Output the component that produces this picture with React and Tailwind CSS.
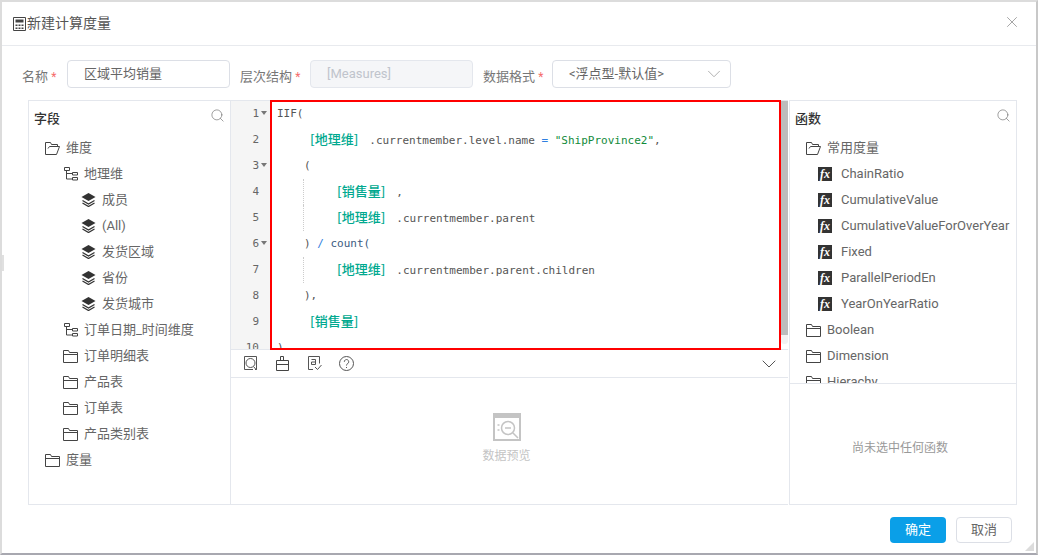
import React from 'react';
import { Search, X, ChevronDown } from 'lucide-react';

const FONT = { fontFamily: 'Roboto, "Noto Sans CJK SC", sans-serif' };

const FolderIcon = () => (
  <svg width="15" height="13" viewBox="0 0 15 13" fill="none" stroke="#444" strokeWidth="1" className="shrink-0">
    <path d="M.5 12.5V.5h5l1 2h8v10z M.5 4.5h14" />
  </svg>
);

const FolderOpenIcon = () => (
  <svg width="15" height="13" viewBox="0 0 15 13" fill="none" stroke="#444" strokeWidth="1" className="shrink-0">
    <path d="M.5 12.5V.5h5l1 2h6v2 M.5 12.5h11l3-8h-10l-1.500 2" />
  </svg>
);

const TreeIcon = () => (
  <svg width="15" height="14" viewBox="0 0 15 14" fill="none" stroke="#444" strokeWidth="1" className="shrink-0">
    <path d="M1.500 .5h5v3h-5z M9.500 5.500h5v2.500h-5z M9.500 10.500h5v2.500h-5z M3.500 3.500v8.500h6 M3.500 6.500h6" />
  </svg>
);

const LayerIcon = () => (
  <svg width="15" height="14" viewBox="0 0 15 14" className="shrink-0">
    <path d="M7.500 0 14.500 4 7.500 8 .5 4z" fill="#333" />
    <path d="M1.500 7.500 7.500 11 13.500 7.500M1.500 10 7.500 13.500 13.500 10" fill="none" stroke="#333" strokeWidth="1.300" />
  </svg>
);

const FxIcon = () => (
  <span className="w-[14px] h-[14px] shrink-0 bg-[#333] text-white flex items-center justify-center font-['Liberation_Serif'] italic font-bold text-[12px] leading-none">
    fx
  </span>
);

const CalcIcon = () => (
  <svg width="13" height="14" viewBox="0 0 13 14" fill="none" className="shrink-0">
    <path d="M.5.5h12v13H.5z" stroke="#444" />
    <path d="M2.500 2.500h8v3h-8z" fill="#444" />
    <path d="M2.500 7.500h2v1.500h-2zM5.500 7.500h2v1.500h-2zM8.500 7.500h2v1.500h-2zM2.500 10.500h2v1.500h-2zM5.500 10.500h2v1.500h-2zM8.500 10.500h2v1.500h-2z" fill="#444" />
  </svg>
);

function Row({ indent, icon, children }) {
  return (
    <div className={`h-[26px] flex items-center gap-[6px] whitespace-nowrap ${indent}`}>
      {icon}
      <span>{children}</span>
    </div>
  );
}

function Label({ children, className }) {
  return (
    <span className={`text-[13px] text-[#777] whitespace-nowrap mt-[5px] ${className}`}>
      {children} <span className="text-[12px] text-[#f56c6c]">*</span>
    </span>
  );
}

const Member = ({ children }) => (
  <span className="text-[#00a98f] font-['Noto_Sans_CJK_SC'] font-medium text-[13px] mr-[11px] leading-none">[{children}]</span>
);

const codeLines = [
  { n: 1, fold: true, body: <span className="pl-[7px]">IIF(</span> },
  { n: 2, body: <span className="pl-[40px]"><Member>地理维</Member>.currentmember.level.name <span className="text-[#2f7fe0]">=</span> <span className="text-[#118a3a]">"ShipProvince2"</span>,</span> },
  { n: 3, fold: true, body: <span className="pl-[34px]">(</span> },
  { n: 4, guide: true, body: <span className="pl-[67px]"><Member>销售量</Member>,</span> },
  { n: 5, guide: true, body: <span className="pl-[67px]"><Member>地理维</Member>.currentmember.parent</span> },
  { n: 6, fold: true, body: <span className="pl-[34px]">) <span className="text-[#2f7fe0]">/</span> <span className="text-[#3c5a80]">count(</span></span> },
  { n: 7, guide: true, body: <span className="pl-[67px]"><Member>地理维</Member>.currentmember.parent.children</span> },
  { n: 8, body: <span className="pl-[34px]">),</span> },
  { n: 9, body: <span className="pl-[40px]"><Member>销售量</Member></span> },
  { n: 10, body: <span className="pl-[7px]">)</span> },
];

export default function App() {
  return (
    <div style={FONT} className="relative w-[1038px] h-[555px] overflow-hidden bg-white border-l-2 border-r-2 border-t-2 border-b-2 border-l-[#dcdcdc] border-r-[#c8c8c8] border-t-[#dcdcdc] border-b-[#a8a8b0] flex flex-col text-[13px] text-[#666]">
      {/* header */}
      <div className="h-[44px] shrink-0 border-b border-[#e8eaee] flex items-center pl-[11px] pr-[15px] text-[#555] text-[14px]">
        <CalcIcon />
        <span className="flex-1 ml-[1px] mb-[1px]">新建计算度量</span>
        <X size={18} strokeWidth={1} color="#888" className="mt-[-3px]" />
      </div>

      {/* form row */}
      <div className="h-[28px] mt-[14px] shrink-0 flex items-center pl-[20px]">
        <Label className="w-[45px]">名称</Label>
        <div className="w-[163px] h-[28px] border border-[#dcdfe6] rounded-[4px] flex items-center pl-[16px] text-[#666]">区域平均销量</div>
        <Label className="ml-[10px] w-[70px]">层次结构</Label>
        <div className="w-[163px] h-[28px] border border-[#e4e7ed] bg-[#f5f6f8] rounded-[4px] flex items-center pl-[16px] text-[#c0c4cc]">[Measures]</div>
        <Label className="ml-[10px] w-[69px]">数据格式</Label>
        <div className="w-[179px] h-[28px] border border-[#dcdfe6] rounded-[4px] flex items-center justify-between pl-[16px] pr-[5px] text-[#666]">
          <span>&lt;浮点型-默认值&gt;</span>
          <ChevronDown size={22} strokeWidth={1} color="#aaa" />
        </div>
      </div>

      {/* panels */}
      <div className="mt-[12px] h-[405px] shrink-0 flex ml-[26px]">
        {/* fields */}
        <div className="w-[203px] shrink-0 border border-[#e4e7ed] flex flex-col">
          <div className="h-[33px] flex items-center justify-between pl-[5px] pr-[5px] mt-[1px] text-[#333] font-medium">
            <span>字段</span>
            <Search size={15} strokeWidth={1} color="#666" className="mt-[-6px]" />
          </div>
          <Row indent="pl-[16px]" icon={<FolderOpenIcon />}>维度</Row>
          <Row indent="pl-[34px]" icon={<TreeIcon />}>地理维</Row>
          <Row indent="pl-[52px]" icon={<LayerIcon />}>成员</Row>
          <Row indent="pl-[52px]" icon={<LayerIcon />}>(All)</Row>
          <Row indent="pl-[52px]" icon={<LayerIcon />}>发货区域</Row>
          <Row indent="pl-[52px]" icon={<LayerIcon />}>省份</Row>
          <Row indent="pl-[52px]" icon={<LayerIcon />}>发货城市</Row>
          <Row indent="pl-[34px]" icon={<TreeIcon />}>订单日期_时间维度</Row>
          <Row indent="pl-[34px]" icon={<FolderIcon />}>订单明细表</Row>
          <Row indent="pl-[34px]" icon={<FolderIcon />}>产品表</Row>
          <Row indent="pl-[34px]" icon={<FolderIcon />}>订单表</Row>
          <Row indent="pl-[34px]" icon={<FolderIcon />}>产品类别表</Row>
          <Row indent="pl-[16px]" icon={<FolderIcon />}>度量</Row>
        </div>

        {/* editor */}
        <div className="w-[557px] shrink-0 border-b border-[#e4e7ed] flex flex-col">
          <div className="relative h-[249px] shrink-0 overflow-hidden flex border-t border-[#e4e7ed]">
            <div className="flex-1 min-w-0 font-['DejaVu_Sans_Mono'] text-[11px] text-[#555] whitespace-pre">
              {codeLines.map((line) => (
                <div key={line.n} className="h-[26px] flex items-center">
                  <div className="w-[39px] h-full shrink-0 bg-[#f5f5f5] relative flex items-center justify-end pr-[11px] pt-[1px] text-[#666]">
                    {line.n}
                    {line.fold && <span className="absolute right-[3px] top-[10px] border-x-[3px] border-t-[4px] border-x-transparent border-t-[#777]" />}
                  </div>
                  {line.guide && <span className="absolute left-[72px] h-[26px] border-l border-dotted border-[#ccc]" />}
                  <span className="pt-[1px]">{line.body}</span>
                </div>
              ))}
            </div>
            <div className="w-[7px] h-[243px] shrink-0 bg-[#f2f2f2] rounded-b-[3px]">
              <div className="h-[234px] bg-[#bcbcbc]" />
            </div>
          </div>

          <div className="h-[29px] shrink-0 border-t border-b border-[#e4e7ed] flex items-center pl-[12px] pr-[7px] gap-[17px]">
            <svg width="15" height="15" viewBox="0 0 15 15" fill="none" stroke="#555">
              <path d="M3 .5H1.500v13H3M12 .5h1.500v13H12M3 .5h9M3 13.500h7" />
              <circle cx="7.500" cy="7" r="4.500" />
              <path d="M10.500 10.500l3 3.500" />
            </svg>
            <svg width="15" height="15" viewBox="0 0 15 15" fill="none" stroke="#444">
              <path d="M1.500 4.500h12v10h-12zM1.500 8.500h12M5.500 4.500v-4h3v4" />
            </svg>
            <svg width="15" height="15" viewBox="0 0 15 15" fill="none" stroke="#555">
              <path d="M6 13.500H1.500V.5h11v7M8 11l2.500 2.500L14.500 9M4.500 3.500h4v5h-4v-2.500h4" />
            </svg>
            <svg width="15" height="15" viewBox="0 0 15 15" fill="none" stroke="#555">
              <circle cx="7.500" cy="7.500" r="7" />
              <path d="M5.300 5.800a2.200 2.200 0 1 1 3.400 1.800c-.8.500-1.200 1-1.200 1.900M7.500 11v1" />
            </svg>
            <ChevronDown size={24} strokeWidth={1} color="#555" className="ml-auto" />
          </div>

          <div className="flex-1 flex flex-col items-center justify-center pb-[4px] pr-[6px]">
            <svg width="28" height="28" viewBox="0 0 28 28">
              <path d="M0 0h28v28H0z" fill="#c4c4c4" />
              <path d="M2 5h24v21H2z" fill="#fff" />
              <circle cx="15" cy="15" r="6.500" fill="none" stroke="#c4c4c4" strokeWidth="1.500" />
              <path d="M12 15h6M20 20l5 5M4.500 12h2M4.500 17h2" stroke="#c4c4c4" strokeWidth="1.500" />
            </svg>
            <span className="mt-[6px] text-[12px] text-[#c4c4c4]">数据预览</span>
          </div>
        </div>

        {/* functions */}
        <div className="w-[228px] shrink-0 ml-[1px] border border-[#e4e7ed] flex flex-col">
          <div className="h-[283px] shrink-0 overflow-hidden border-b border-[#e4e7ed]">
            <div className="h-[33px] flex items-center justify-between pl-[5px] pr-[5px] mt-[1px] text-[#333] font-medium">
              <span>函数</span>
              <Search size={15} strokeWidth={1} color="#666" className="mt-[-6px]" />
            </div>
            <Row indent="pl-[16px]" icon={<FolderOpenIcon />}>常用度量</Row>
            <div className="text-[#666]">
              <Row indent="pl-[28px] [&>span:last-child]:ml-[3px]" icon={<FxIcon />}>ChainRatio</Row>
              <Row indent="pl-[28px] [&>span:last-child]:ml-[3px]" icon={<FxIcon />}>CumulativeValue</Row>
              <Row indent="pl-[28px] [&>span:last-child]:ml-[3px]" icon={<FxIcon />}>CumulativeValueForOverYear</Row>
              <Row indent="pl-[28px] [&>span:last-child]:ml-[3px]" icon={<FxIcon />}>Fixed</Row>
              <Row indent="pl-[28px] [&>span:last-child]:ml-[3px]" icon={<FxIcon />}>ParallelPeriodEn</Row>
              <Row indent="pl-[28px] [&>span:last-child]:ml-[3px]" icon={<FxIcon />}>YearOnYearRatio</Row>
            </div>
            <Row indent="pl-[16px]" icon={<FolderIcon />}>Boolean</Row>
            <Row indent="pl-[16px]" icon={<FolderIcon />}>Dimension</Row>
            <Row indent="pl-[16px]" icon={<FolderIcon />}>Hierachy</Row>
          </div>
          <div className="flex-1 flex items-center justify-center pt-[8px] pr-[6px] text-[12px] text-[#999]">尚未选中任何函数</div>
        </div>
      </div>

      {/* footer */}
      <div className="mt-[12px] flex justify-end pr-[24px] gap-[10px]">
        <button className="w-[56px] h-[26px] rounded-[4px] bg-[#0a9fe8] text-white text-[13px]">确定</button>
        <button className="w-[56px] h-[26px] rounded-[4px] border border-[#dcdfe6] text-[#666] text-[13px]">取消</button>
      </div>

      {/* red highlight drawn over the editor */}
      <div className="absolute left-[268px] top-[98px] w-[511px] h-[250px] border-2 border-[#ff0000] pointer-events-none" />
      {/* drag handles */}
      <div className="absolute left-0 top-[253px] w-[2px] h-[16px] bg-[#e0e0e0]" />
      <div className="absolute right-[2px] bottom-[2px] w-0 h-0 border-l-[9px] border-b-[9px] border-l-transparent border-b-[#dcdcdc]" />
    </div>
  );
}
